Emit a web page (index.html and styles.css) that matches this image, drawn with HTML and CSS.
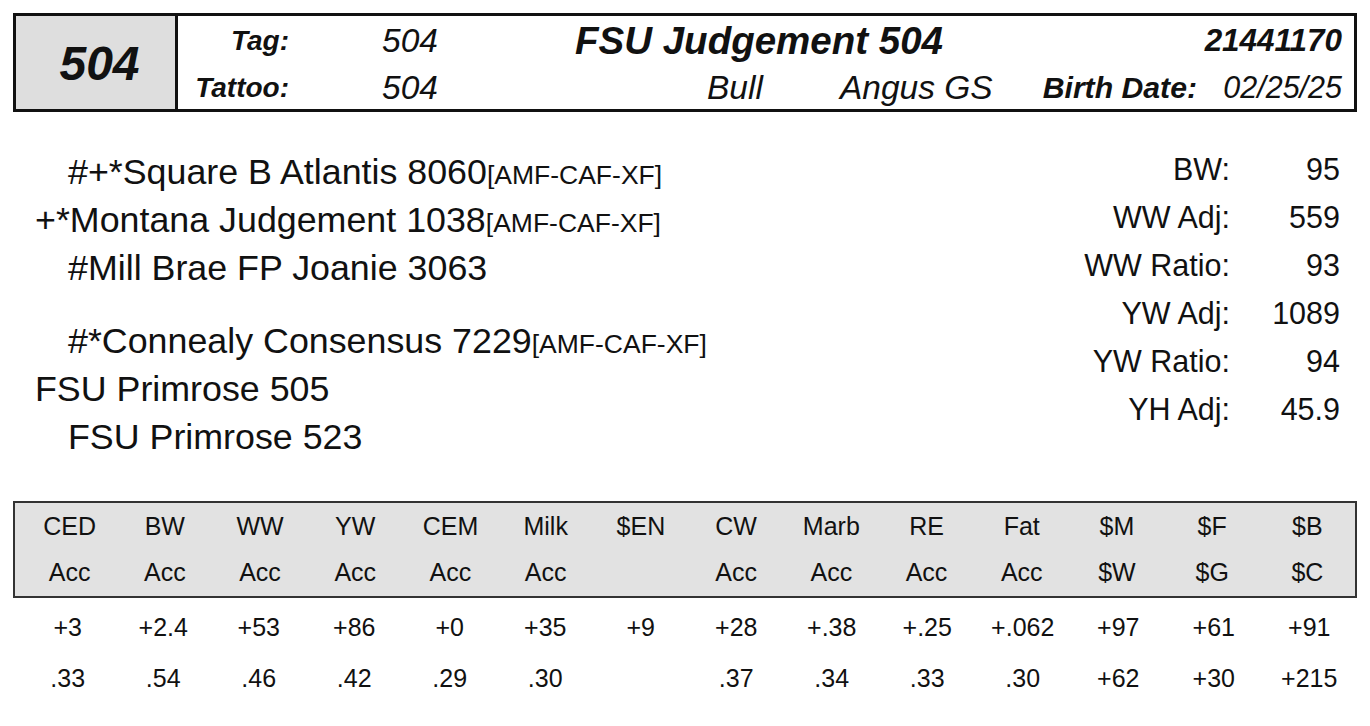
FILE: index.html
```html
<!DOCTYPE html>
<html>
<head>
<meta charset="utf-8">
<link rel="stylesheet" href="styles.css">
</head>
<body>
<div class="card">
  <header class="head">
    <div class="lot">504</div>
    <div class="info">
      <span class="lbl r1">Tag:</span>
      <span class="val c3 r1">504</span>
      <span class="title r1">FSU Judgement 504</span>
      <span class="reg r1">21441170</span>
      <span class="lbl r2">Tattoo:</span>
      <span class="val c3 r2">504</span>
      <span class="val c5 r2">Bull</span>
      <span class="val c6 r2">Angus GS</span>
      <span class="bdl r2">Birth Date:</span>
      <span class="val c8 r2">02/25/25</span>
    </div>
  </header>

  <section class="mid">
    <div class="pedigree">
      <div class="grp">
        <div class="ln gp">#+*Square B Atlantis 8060<span class="sfx">[AMF-CAF-XF]</span></div>
        <div class="ln par">+*Montana Judgement 1038<span class="sfx">[AMF-CAF-XF]</span></div>
        <div class="ln gp">#Mill Brae FP Joanie 3063</div>
      </div>
      <div class="grp">
        <div class="ln gp">#*Connealy Consensus 7229<span class="sfx">[AMF-CAF-XF]</span></div>
        <div class="ln par">FSU Primrose 505</div>
        <div class="ln gp">FSU Primrose 523</div>
      </div>
    </div>
    <div class="stats">
      <span class="sl">BW:</span><span class="sv">95</span>
      <span class="sl">WW Adj:</span><span class="sv">559</span>
      <span class="sl">WW Ratio:</span><span class="sv">93</span>
      <span class="sl">YW Adj:</span><span class="sv">1089</span>
      <span class="sl">YW Ratio:</span><span class="sv">94</span>
      <span class="sl">YH Adj:</span><span class="sv">45.9</span>
    </div>
  </section>

  <section class="epd">
    <div class="epd-head">
      <span>CED</span><span>BW</span><span>WW</span><span>YW</span><span>CEM</span><span>Milk</span><span>$EN</span><span>CW</span><span>Marb</span><span>RE</span><span>Fat</span><span>$M</span><span>$F</span><span>$B</span>
      <span>Acc</span><span>Acc</span><span>Acc</span><span>Acc</span><span>Acc</span><span>Acc</span><span></span><span>Acc</span><span>Acc</span><span>Acc</span><span>Acc</span><span>$W</span><span>$G</span><span>$C</span>
    </div>
    <div class="epd-body">
      <span>+3</span><span>+2.4</span><span>+53</span><span>+86</span><span>+0</span><span>+35</span><span>+9</span><span>+28</span><span>+.38</span><span>+.25</span><span>+.062</span><span>+97</span><span>+61</span><span>+91</span>
      <span>.33</span><span>.54</span><span>.46</span><span>.42</span><span>.29</span><span>.30</span><span></span><span>.37</span><span>.34</span><span>.33</span><span>.30</span><span>+62</span><span>+30</span><span>+215</span>
    </div>
  </section>
</div>
</body>
</html>
```

FILE: styles.css
```css
html, body {
  margin: 0;
  padding: 0;
  background: #ffffff;
}
body {
  font-family: "Liberation Sans", Arial, sans-serif;
  color: #111;
  width: 1370px;
  height: 726px;
  overflow: hidden;
}
.card {
  padding: 13px 13px 0 13px;
}

/* Header */
.head {
  display: flex;
  border: 3px solid #111;
  height: 93px;
}
.lot {
  width: 162px;
  background: #dedede;
  border-right: 3px solid #111;
  display: flex;
  align-items: center;
  justify-content: center;
  font-weight: bold;
  font-style: italic;
  font-size: 48px;
  padding-left: 8px;
  padding-top: 2px;
  box-sizing: border-box;
}
.info {
  flex: 1;
  display: grid;
  grid-template-columns: 114px 90px 193px 122px 130px 200px 170px 1fr;
  grid-template-rows: 50px 43px;
  padding-right: 12px;
  align-items: center;
  font-style: italic;
}
.r1 { grid-row: 1; }
.r2 { grid-row: 2; }
.lbl {
  grid-column: 1;
  text-align: right;
  font-weight: bold;
  font-size: 28px;
  padding-right: 3px;
}
.val {
  font-size: 33.5px;
}
.c3 { grid-column: 3; }
.c5 { grid-column: 5; padding-left: 10px; }
.c6 { grid-column: 6; padding-left: 13px; }
.c8 { grid-column: 8; text-align: right; font-size: 30.5px; }
.title {
  grid-column: 4 / 7;
  font-weight: bold;
  font-size: 38.5px;
}
.reg {
  grid-column: 7 / 9;
  text-align: right;
  font-weight: bold;
  font-size: 31.4px;
}
.bdl {
  grid-column: 7;
  text-align: right;
  font-weight: bold;
  font-size: 30.2px;
}

/* Pedigree + stats */
.mid {
  display: flex;
  justify-content: space-between;
  padding-top: 33px;
}
.pedigree {
  display: flex;
  flex-direction: column;
  gap: 25px;
  padding-top: 3px;
}
.ln {
  font-size: 35.8px;
  line-height: 48px;
  white-space: nowrap;
}
.gp { padding-left: 55px; }
.par { padding-left: 22px; }
.sfx {
  font-size: 26.5px;
  line-height: 1;
}
.stats {
  display: grid;
  grid-template-columns: auto 110px;
  grid-auto-rows: 48px;
  align-items: center;
  padding-right: 17px;
  font-size: 30.5px;
}
.sl { text-align: right; }
.sv { text-align: right; }

/* EPD table */
.epd {
  margin-top: 40px;
}
.epd-head, .epd-body {
  display: grid;
  grid-template-columns: repeat(14, 1fr);
  text-align: center;
  font-size: 25px;
  padding-left: 7px;
}
.epd-head {
  background: #e2e2e2;
  border: 2px solid #333;
  grid-auto-rows: 46.5px;
  align-items: center;
}
.epd-body {
  padding-top: 4px;
  grid-auto-rows: 51px;
  align-items: center;
}
```
